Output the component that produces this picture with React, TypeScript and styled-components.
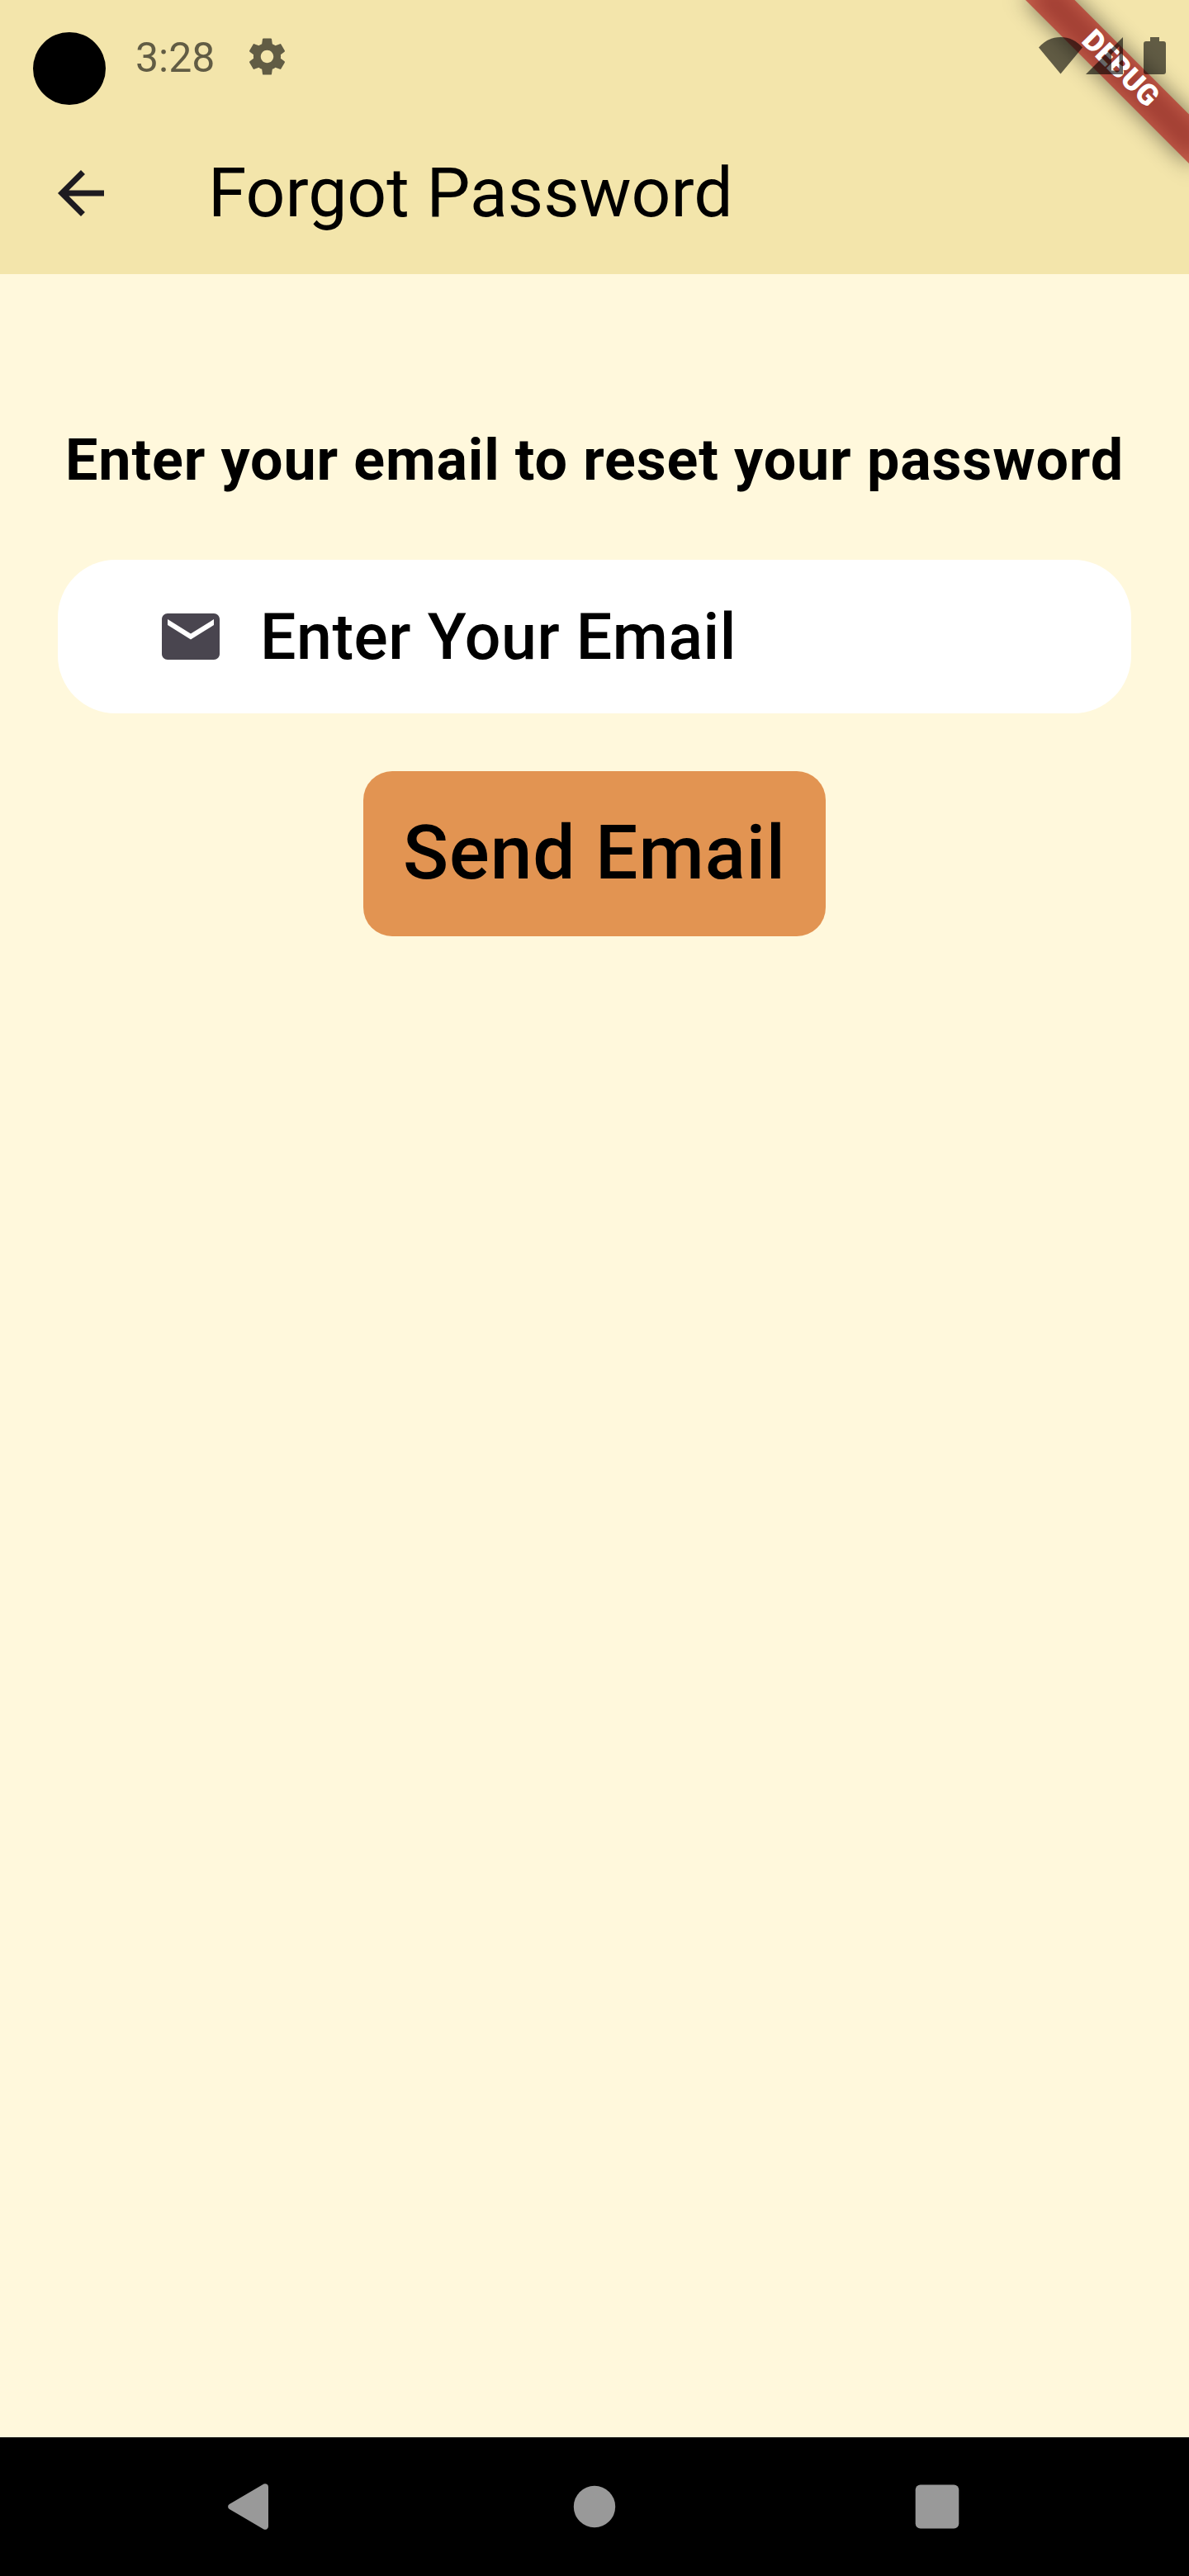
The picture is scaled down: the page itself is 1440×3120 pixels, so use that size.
import React from "react";
import styled, { createGlobalStyle } from "styled-components";

const GlobalStyle = createGlobalStyle`
  *, *::before, *::after { box-sizing: border-box; }
  body { margin: 0; background: #fff8dc; }
`;

const Screen = styled.div`
  position: relative;
  display: flex;
  flex-direction: column;
  width: 1440px;
  height: 3120px;
  overflow: hidden;
  background: #fff8dc;
  color: #000;
  font-family: Roboto, "Liberation Sans", sans-serif;
`;

const Header = styled.header`
  display: flex;
  flex-direction: column;
  height: 332px;
  background: #f3e5ab;
`;

const StatusBar = styled.div`
  display: flex;
  align-items: flex-start;
  justify-content: space-between;
  height: 136px;
  padding: 39px 27px 0 40px;
`;

const StatusLeft = styled.div`
  display: flex;
  align-items: flex-start;
`;

const Camera = styled.div`
  width: 88px;
  height: 88px;
  border-radius: 50%;
  background: #000;
`;

const Clock = styled.span`
  margin: 2px 0 0 36px;
  width: 96px;
  font-size: 50px;
  line-height: 58px;
  color: rgba(0, 0, 0, 0.6);
  white-space: nowrap;
`;

const GearIcon = styled.svg`
  width: 53px;
  height: 53px;
  margin: 3px 0 0 37px;
  fill: rgba(0, 0, 0, 0.6);
`;

const StatusIcons = styled.div`
  position: relative;
  z-index: 2;
  display: flex;
  padding-top: 6px;
`;

const StatusGlyph = styled.svg<{ $w: number; $gap?: number }>`
  width: ${(p) => p.$w}px;
  height: 46px;
  margin-left: ${(p) => p.$gap ?? 0}px;
  fill: rgba(0, 0, 0, 0.6);
`;

const AppBar = styled.div`
  display: flex;
  align-items: center;
  height: 196px;
  padding-left: 56px;
`;

const BackButton = styled.button`
  display: flex;
  width: 84px;
  height: 84px;
  padding: 0;
  border: 0;
  background: none;
  color: #1d1b20;
`;

const Icon = styled.svg`
  width: 84px;
  height: 84px;
  fill: currentColor;
`;

const Title = styled.h1`
  margin: 0 0 0 112px;
  font-size: 84px;
  line-height: 98px;
  font-weight: 400;
  white-space: nowrap;
`;

const Body = styled.main`
  flex: 1;
  display: flex;
  flex-direction: column;
  align-items: center;
  padding: 175px 70px 0;
`;

const Prompt = styled.p`
  margin: 0;
  font-size: 70px;
  line-height: 100px;
  font-weight: 700;
  letter-spacing: 0.875px;
  white-space: nowrap;
`;

const Field = styled.label`
  display: flex;
  align-items: center;
  width: 1300px;
  height: 186px;
  margin-top: 71px;
  padding-left: 119px;
  border-radius: 70px;
  background: #fff;
  color: #49454f;
`;

const Input = styled.input`
  flex: 1;
  min-width: 0;
  height: 112px;
  margin-left: 42px;
  padding: 2px 0 0;
  border: 0;
  outline: 0;
  background: none;
  font-family: inherit;
  font-size: 77px;
  line-height: 110px;
  font-weight: 500;
  letter-spacing: 0.525px;
  &::placeholder { color: #000; opacity: 1; }
`;

const SendButton = styled.button`
  width: 560px;
  height: 200px;
  margin-top: 70px;
  padding: 0 0 2px;
  border: 0;
  border-radius: 35px;
  background: #e29452;
  color: #000;
  font-family: inherit;
  font-size: 91px;
  font-weight: 500;
  letter-spacing: 0.95px;
  white-space: nowrap;
`;

const NavBar = styled.nav`
  display: flex;
  align-items: center;
  justify-content: space-between;
  height: 168px;
  padding: 0 276px;
  background: #000;
`;

const NavIcon = styled.svg`
  width: 56px;
  height: 56px;
  fill: #999;
`;

/* Ribbon laid over the top-right corner, rotated about that corner. */
const Banner = styled.div`
  position: absolute;
  z-index: 1;
  top: 0;
  left: 1440px;
  width: 0;
  height: 0;
  transform: rotate(45deg);
`;

const BannerShadow = styled.div`
  position: absolute;
  left: -140px;
  top: 98px;
  width: 280px;
  height: 42px;
  background: rgba(0, 0, 0, 0.5);
  filter: blur(13.86px);
`;

const BannerStrip = styled.div`
  position: absolute;
  left: -140px;
  top: 98px;
  width: 280px;
  height: 42px;
  background: rgba(183, 28, 28, 0.627);
  color: #fff;
  font-size: 35.7px;
  line-height: 38px;
  font-weight: 900;
  text-align: center;
`;

export default function App() {
  return (
    <Screen>
      <GlobalStyle />
      <Header>
        <StatusBar>
          <StatusLeft>
            <Camera />
            <Clock>3:28</Clock>
            <GearIcon viewBox="0 0 24 24">
              <path d="M19.43 12.98c.04-.32.07-.64.07-.98s-.03-.66-.07-.98l2.11-1.65c.19-.15.24-.42.12-.64l-2-3.46c-.12-.22-.39-.3-.61-.22l-2.49 1c-.52-.4-1.080-.73-1.690-.98l-.38-2.650C14.460 2.180 14.250 2 14 2h-4c-.25 0-.46.18-.49.42l-.38 2.650c-.61.25-1.170.59-1.690.98l-2.490-1c-.23-.09-.49 0-.61.22l-2 3.460c-.13.22-.07.49.12.64l2.110 1.650c-.04.32-.07.65-.07.98s.03.66.07.98l-2.110 1.650c-.19.15-.24.42-.12.64l2 3.460c.12.22.39.3.61.22l2.490-1c.52.4 1.080.73 1.690.98l.38 2.650c.03.24.24.42.49.42h4c.25 0 .46-.18.49-.42l.38-2.650c.61-.25 1.170-.59 1.690-.98l2.490 1c.23.09.49 0 .61-.22l2-3.460c.12-.22.07-.49-.12-.64l-2.110-1.650zM12 15.500c-1.930 0-3.500-1.570-3.500-3.500s1.570-3.500 3.500-3.500 3.500 1.570 3.500 3.500-1.570 3.500-3.500 3.500z" />
            </GearIcon>
          </StatusLeft>
          <StatusIcons>
            <StatusGlyph $w={54} viewBox="0 0 54 46">
              <path d="M0 12.500C7 4.500 16 0 26.500 0S46 4.500 53 12.500L26.500 44.500Z" />
            </StatusGlyph>
            <StatusGlyph $w={46} $gap={3} viewBox="0 0 46 46">
              <path fillRule="evenodd" d="M0 45L45 0V45ZM31 20.400V40.500H40.500V10.900Z" />
            </StatusGlyph>
            <StatusGlyph $w={28} $gap={24} viewBox="0 0 28 46">
              <path d="M8 0H19V5H24a3 3 0 0 1 3 3V42a3 3 0 0 1-3 3H3a3 3 0 0 1-3-3V8a3 3 0 0 1 3-3H8Z" />
            </StatusGlyph>
          </StatusIcons>
        </StatusBar>
        <AppBar>
          <BackButton aria-label="Back">
            <Icon viewBox="0 0 24 24">
              <path d="M20 11H7.830l5.590-5.590L12 4l-8 8 8 8 1.410-1.410L7.830 13H20v-2z" />
            </Icon>
          </BackButton>
          <Title>Forgot Password</Title>
        </AppBar>
      </Header>
      <Body>
        <Prompt>Enter your email to reset your password</Prompt>
        <Field>
          <Icon viewBox="0 0 24 24">
            <path d="M20 4H4c-1.100 0-1.990.9-1.990 2L2 18c0 1.100.9 2 2 2h16c1.100 0 2-.9 2-2V6c0-1.100-.9-2-2-2zm0 4l-8 5-8-5V6l8 5 8-5v2z" />
          </Icon>
          <Input type="email" placeholder="Enter Your Email" />
        </Field>
        <SendButton>Send Email</SendButton>
      </Body>
      <NavBar>
        <NavIcon viewBox="0 0 56 56">
          <path d="M43.500.6A3.800 3.800 0 0 1 49 4V52A3.800 3.800 0 0 1 43.500 55.400L1.800 31A3.500 3.500 0 0 1 1.800 25Z" />
        </NavIcon>
        <NavIcon viewBox="0 0 56 56">
          <circle cx="28" cy="28" r="25.200" />
        </NavIcon>
        <NavIcon viewBox="0 0 56 56">
          <rect x="0.700" y="1.500" width="52.600" height="53" rx="6" />
        </NavIcon>
      </NavBar>
      <Banner>
        <BannerShadow />
        <BannerStrip>DEBUG</BannerStrip>
      </Banner>
    </Screen>
  );
}
